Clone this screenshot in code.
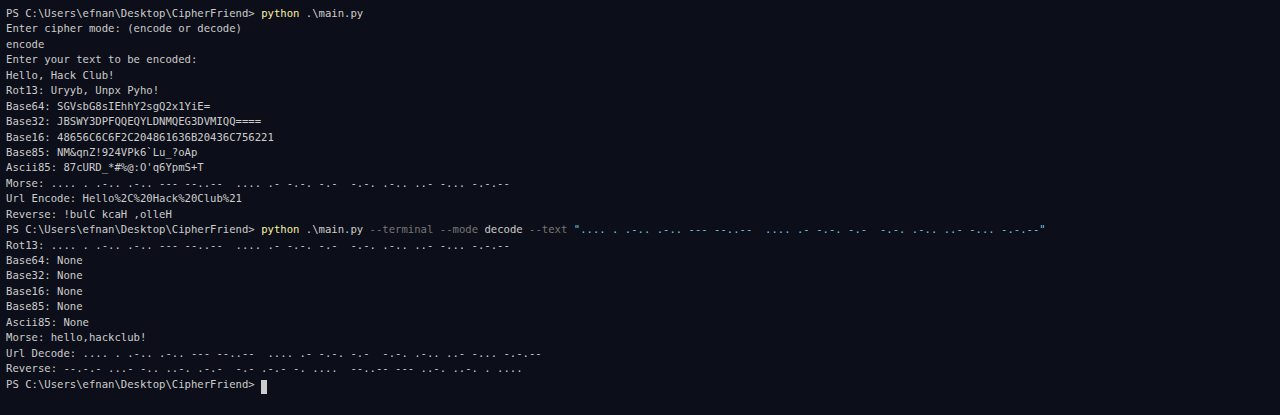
const prompt = "PS C:\\Users\\efnan\\Desktop\\CipherFriend> ";
const morse = ".... . .-.. .-.. --- --..--  .... .- -.-. -.-  -.-. .-.. ..- -... -.-.--";
const reversed = morse.split("").reverse().join("");

const firstRun = [
  "Enter cipher mode: (encode or decode)",
  "encode",
  "Enter your text to be encoded:",
  "Hello, Hack Club!",
  "Rot13: Uryyb, Unpx Pyho!",
  "Base64: SGVsbG8sIEhhY2sgQ2x1YiE=",
  "Base32: JBSWY3DPFQQEQYLDNMQEG3DVMIQQ====",
  "Base16: 48656C6C6F2C204861636B20436C756221",
  "Base85: NM&qnZ!924VPk6`Lu_?oAp",
  "Ascii85: 87cURD_*#%@:O'q6YpmS+T",
  `Morse: ${morse}`,
  "Url Encode: Hello%2C%20Hack%20Club%21",
  "Reverse: !bulC kcaH ,olleH",
];

const secondRun = [
  `Rot13: ${morse}`,
  "Base64: None",
  "Base32: None",
  "Base16: None",
  "Base85: None",
  "Ascii85: None",
  "Morse: hello,hackclub!",
  `Url Decode: ${morse}`,
  `Reverse: ${reversed}`,
];

function Line({ children }: { children?: React.ReactNode }) {
  return <div className="h-[15.45px] whitespace-pre">{children}</div>;
}

export default function App() {
  return (
    <div className="h-[415px] w-full overflow-hidden bg-[#0c0f19] px-[6px] pt-[6px] font-['DejaVu_Sans_Mono',monospace] text-[10.6px] leading-[15.45px] text-[#cccccc]">
      <Line>
        {prompt}
        <span className="text-[#f9f1a5]">python</span> .\main.py
      </Line>
      {firstRun.map((l, i) => (
        <Line key={`a${i}`}>{l}</Line>
      ))}
      <Line>
        {prompt}
        <span className="text-[#f9f1a5]">python</span> .\main.py{" "}
        <span className="text-[#767676]">--terminal</span>{" "}
        <span className="text-[#767676]">--mode</span> decode{" "}
        <span className="text-[#767676]">--text</span>{" "}
        <span className="text-[#6cc6e6]">"{morse}"</span>
      </Line>
      {secondRun.map((l, i) => (
        <Line key={`b${i}`}>{l}</Line>
      ))}
      <Line>
        {prompt}
        <span className="inline-block h-[14px] w-[6px] translate-y-[3px] bg-[#cccccc] align-top" />
      </Line>
    </div>
  );
}
